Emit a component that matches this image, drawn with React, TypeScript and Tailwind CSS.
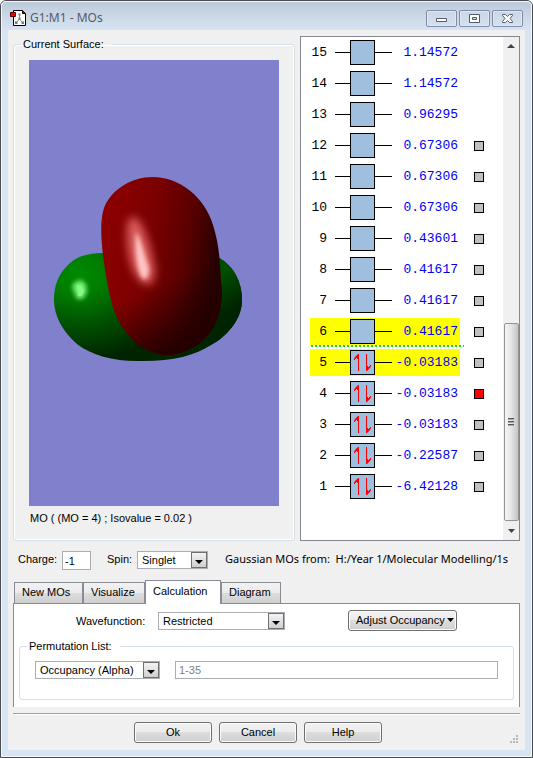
import { useState, type ReactNode } from "react";

type Orbital = { n: number; energy: string; occupied?: boolean; surface?: boolean; marker?: "homo" | "lumo" };

const orbitals: Orbital[] = [
  { n: 15, energy: "1.14572" },
  { n: 14, energy: "1.14572" },
  { n: 13, energy: "0.96295" },
  { n: 12, energy: "0.67306", surface: true },
  { n: 11, energy: "0.67306", surface: true },
  { n: 10, energy: "0.67306", surface: true },
  { n: 9, energy: "0.43601", surface: true },
  { n: 8, energy: "0.41617", surface: true },
  { n: 7, energy: "0.41617", surface: true },
  { n: 6, energy: "0.41617", surface: true, marker: "lumo" },
  { n: 5, energy: "-0.03183", surface: true, occupied: true, marker: "homo" },
  { n: 4, energy: "-0.03183", surface: true, occupied: true },
  { n: 3, energy: "-0.03183", surface: true, occupied: true },
  { n: 2, energy: "-0.22587", surface: true, occupied: true },
  { n: 1, energy: "-6.42128", surface: true, occupied: true },
];

function AppIcon() {
  return (
    <svg width="16" height="16" viewBox="0 0 16 16" aria-hidden="true">
      <path d="M3.500 .5h9l3 3v12h-12z" fill="#fff" stroke="#000" />
      <path d="M12.500 .5v3h3" fill="#c00" stroke="#000" />
      <path d="M9.500 5v4M9.500 9l-3 3.500M9.500 9l3 3.500" fill="none" stroke="#999" />
      <path d="M8.500 3.500h2v2h-2zM8.500 7.500h2v2.500h-2zM5 11.500h2.500v2.500H5zM11.500 11.500H14v2.500h-2.500z" fill="#777" />
      <path d="M.5 2.500h5v4h-5z" fill="#f00" stroke="#500" />
    </svg>
  );
}

function CaptionButton({ label, children }: { label: string; children: ReactNode }) {
  return (
    <button
      aria-label={label}
      className="flex h-[17px] w-[31px] items-center justify-center rounded-[2px] border border-[#7f8ba8] bg-linear-to-b from-[#c9d7e6] to-[#d3e1ef] shadow-[inset_0_0_0_1px_#dfe9f4]"
    >
      <svg width="13" height="11" viewBox="0 0 13 11" aria-hidden="true">
        {children}
      </svg>
    </button>
  );
}

function Surface() {
  return (
    <svg className="block h-[446px] w-full bg-[#8080cc]" viewBox="0 0 250 446" role="img" aria-label="Molecular orbital surface">
      <defs>
        <radialGradient id="green" gradientUnits="userSpaceOnUse" cx="50" cy="214" r="110" gradientTransform="translate(50 214) scale(1 .78) translate(-50 -214)">
          <stop offset="0" stopColor="#008a00" />
          <stop offset=".25" stopColor="#007c00" />
          <stop offset=".6" stopColor="#005000" />
          <stop offset="1" stopColor="#002400" />
        </radialGradient>
        <linearGradient id="lobe" gradientUnits="userSpaceOnUse" x1="190" y1="215" x2="208" y2="246">
          <stop offset="0" stopColor="#004e00" />
          <stop offset="1" stopColor="#002400" />
        </linearGradient>
        <linearGradient id="red" gradientUnits="userSpaceOnUse" x1="82" y1="165" x2="190" y2="182">
          <stop offset="0" stopColor="#8a0000" />
          <stop offset=".35" stopColor="#7c0000" />
          <stop offset=".7" stopColor="#5c0000" />
          <stop offset="1" stopColor="#280000" />
        </linearGradient>
        <linearGradient id="redShade" gradientUnits="userSpaceOnUse" x1="125" y1="228" x2="150" y2="286">
          <stop offset="0" stopColor="#240000" stopOpacity="0" />
          <stop offset=".5" stopColor="#240000" stopOpacity=".45" />
          <stop offset="1" stopColor="#240000" stopOpacity=".95" />
        </linearGradient>
        <filter id="soft3" x="-100%" y="-50%" width="300%" height="200%">
          <feGaussianBlur stdDeviation="4" />
        </filter>
        <filter id="soft2" x="-100%" y="-50%" width="300%" height="200%">
          <feGaussianBlur stdDeviation="2" />
        </filter>
      </defs>
      <path d="M74 193C58 193 46 197 38 206C28 216 25 228 25 240C25 256 34 272 48 284C62 295 84 301 108 301C140 302 166 296 182 285C200 275 213 258 213 240C213 222 205 206 190 198Z" fill="url(#green)" />
      <path d="M189 197C205 206 213 222 213 240C213 258 200 275 182 285L160 293Z" fill="url(#lobe)" />
      <path d="M46 222l6-2 5 4 1 8-4 7h-6l-3-7-2-6z" fill="#70f070" filter="url(#soft2)" />
      <path d="M48 225l5 1 2 5-2 5h-4z" fill="#98ff98" opacity=".6" />
      <path d="M124 117C102 117 82 130 75 148C71 160 72 178 74 195C76 210 78 225 82 240C87 264 108 295 138 295C160 295 178 280 186 265C193 248 194 236 192 222C191 200 190 184 184 165C176 137 150 117 124 117Z" fill="url(#red)" />
      <path d="M124 117C102 117 82 130 75 148C71 160 72 178 74 195C76 210 78 225 82 240C87 264 108 295 138 295C160 295 178 280 186 265C193 248 194 236 192 222C191 200 190 184 184 165C176 137 150 117 124 117Z" fill="url(#redShade)" />
      <path d="M102 157C111 156 116 170 121 186C126 206 129 216 122 224C113 228 104 214 100 198C97 182 96 162 102 157Z" fill="#d85858" filter="url(#soft3)" />
      <path d="M107 172C112 178 115 194 120 208C120 216 118 220 114 219C108 213 105 190 107 172Z" fill="#ffc4c4" filter="url(#soft2)" />
    </svg>
  );
}

function OrbitalRow({ orbital, selected, onToggle }: { orbital: Orbital; selected: boolean; onToggle: () => void }) {
  return (
    <li className="relative flex h-[31px] items-center pl-[9px] font-['Liberation_Mono',monospace] text-[13px]">
      <div className={`flex h-[27px] w-[150px] items-center ${orbital.marker ? "bg-[#ffff00]" : ""}`}>
        <span className="flex w-[17px] justify-end">{orbital.n}</span>
        <span className="ml-2 h-px w-[15px] bg-black" />
        <span className="flex size-[25px] items-center justify-center border border-black bg-[#a0bede]">
          {orbital.occupied && (
            <svg width="19" height="19" viewBox="0 0 19 19" fill="#f00" aria-hidden="true">
              <path d="M5 1h1v17H5zM5 1v5H4V5H3v1H2v1H1V6l1-2 1-1 1-1z" />
              <path d="M13 1h1v17h-1zM14 18v-5h1v1h1v-1h1v-1h1v1l-1 2-1 1-1 1z" />
            </svg>
          )}
        </span>
        <span className="h-px w-[17px] bg-black" />
        <span className="flex w-[66px] justify-end text-[#0000f0]">{orbital.energy}</span>
      </div>
      {orbital.surface && (
        <input
          type="checkbox"
          aria-label={`Show orbital ${orbital.n}`}
          checked={selected}
          onChange={onToggle}
          className="ml-[14px] size-[10px] appearance-none border border-black bg-[#c0c0c0] checked:bg-[#ff0000]"
        />
      )}
      {orbital.marker === "lumo" && (
        <span className="absolute bottom-0 left-[10px] h-[2px] w-[153px] bg-[repeating-linear-gradient(to_right,#00e800_0_2px,#ffffff_2px_4px)]" />
      )}
    </li>
  );
}

function Select({ id, label, value, className }: { id: string; label?: string; value: string; className: string }) {
  return (
    <div className={`relative h-[18px] ${className}`}>
      <select id={id} aria-label={label} className="block h-full w-full appearance-none border border-[#abadb3] bg-white pr-[18px] pb-0.5 pl-1 text-[11px] leading-4">
        <option>{value}</option>
      </select>
      <span className="pointer-events-none absolute top-px right-px flex h-4 w-4 items-center justify-center border border-[#707070] bg-linear-to-b from-[#f4f4f4] to-[#cfcfcf]">
        <svg width="8" height="4" viewBox="0 0 8 4" className="mt-1" aria-hidden="true">
          <path d="M0 0h8L4 4z" />
        </svg>
      </span>
    </div>
  );
}

const pushButton =
  "h-[21px] rounded-[3px] border border-[#707070] bg-[linear-gradient(#f2f2f2,#ebebeb_50%,#dddddd_50%,#cfcfcf)] pb-0.5 shadow-[inset_0_0_0_1px_#fbfbfb]";

const tabs = [
  { name: "New MOs", width: "w-[69px]" },
  { name: "Visualize", width: "w-[62px]" },
  { name: "Calculation", width: "w-[76px]" },
  { name: "Diagram", width: "w-[60px]" },
];

export default function App() {
  const [shown, setShown] = useState<number>(4);
  const [tab, setTab] = useState("Calculation");
  return (
    <div className="w-full rounded-t-[6px] border border-[#4a4a50] bg-[#d7e4f2] font-['Liberation_Sans',Arial,sans-serif] text-[11px] leading-4 text-black">
      <div className="rounded-t-[5px] border border-[#f2f7fc] bg-[linear-gradient(#bccada,#d7e4f2_28px)] px-[6px] pb-[6px]">
        <header className="flex h-7 items-center px-0.5 pt-1">
          <AppIcon />
          <h1 className="ml-1 flex-1 font-['Noto_Sans',sans-serif] text-[12px] text-[#545c68]">G1:M1 - MOs</h1>
          <div className="flex gap-[2px]">
            <CaptionButton label="Minimize">
              <path d="M1.500 5.500h10v3h-10z" fill="#fff" stroke="#555b6b" />
            </CaptionButton>
            <CaptionButton label="Maximize">
              <path d="M1.500 1.500h10v8h-10zM4.500 4.500v2h4v-2z" fill="#fff" fillRule="evenodd" stroke="#555b6b" />
            </CaptionButton>
            <CaptionButton label="Close">
              <path d="M1.500 1.500h3l2 2 2-2h3v1L9 5.500l2.500 3v1h-3l-2-2-2 2h-3v-1L4 5.500l-2.500-3z" fill="#fff" stroke="#555b6b" />
            </CaptionButton>
          </div>
        </header>

        <main className="bg-[#f0f0f0] px-[5px] pt-[6px] pb-[7px]">
          <div className="flex gap-[5px]">
            <fieldset className="min-w-0 flex-1 rounded-[3px] border border-[#d5dfe5] px-[15px] shadow-[inset_0_0_0_1px_#ffffff]">
              <legend className="-ml-2 pr-2 pl-0.5">Current Surface:</legend>
              <div className="pt-2">
                <Surface />
                <p className="pt-1 pb-[14px] pl-px">MO ( (MO = 4) ; Isovalue = 0.02 )</p>
              </div>
            </fieldset>

            <section aria-label="Orbital energies" className="flex w-[220px] border border-[#828790] bg-white">
              <ul className="flex-1 pb-[38px]">
                {orbitals.map((o) => (
                  <OrbitalRow key={o.n} orbital={o} selected={shown === o.n} onToggle={() => setShown(o.n)} />
                ))}
              </ul>
              <div className="flex w-4 flex-col items-center bg-[#f0f0f0]">
                <svg width="8" height="4" viewBox="0 0 8 4" className="mt-[7px]" aria-hidden="true">
                  <path d="M4 0l4 4H0z" fill="#444" />
                </svg>
                <div className="flex-1" />
                <div className="flex h-[198px] w-[15px] items-center justify-center rounded-[2px] border border-[#949494] bg-linear-to-r from-[#f5f5f5] via-[#e4e4e6] to-[#c4c4c8]">
                  <svg width="6" height="8" viewBox="0 0 6 8" aria-hidden="true">
                    <path d="M0 .5h6M0 3.500h6M0 6.500h6" stroke="#555" />
                    <path d="M0 1.500h6M0 4.500h6M0 7.500h6" stroke="#aaa" />
                  </svg>
                </div>
                <svg width="7" height="4" viewBox="0 0 7 4" className="mt-2 mb-[7px]" aria-hidden="true">
                  <path d="M0 0h7L3.500 4z" fill="#444" />
                </svg>
              </div>
            </section>
          </div>

          <div className="mt-[10px] flex h-[19px] items-start pl-[5px]">
            <label htmlFor="charge" className="w-11">Charge:</label>
            <input id="charge" defaultValue="-1" className="h-[19px] w-[29px] border border-[#abadb3] bg-white px-0.5" />
            <label htmlFor="spin" className="ml-4 w-[30px]">Spin:</label>
            <Select id="spin" value="Singlet" className="w-[71px] shrink-0" />
            <p className="ml-[17px] min-w-0 flex-1 overflow-hidden font-['Noto_Sans',sans-serif] text-[11px] whitespace-pre">
              Gaussian MOs from:  H:/Year 1/Molecular Modelling/1s
            </p>
          </div>

          <div role="tablist" className="mt-[10px] flex items-end pl-px">
            {tabs.map((t) => (
              <button
                key={t.name}
                role="tab"
                aria-selected={tab === t.name}
                onClick={() => setTab(t.name)}
                className={`${t.width} border border-b-0 border-[#898c95] pl-[7px] text-left ${
                  tab === t.name
                    ? "relative -mb-px h-6 bg-white pb-1"
                    : "h-[21px] bg-[linear-gradient(#f2f2f2,#ebebeb_50%,#dddddd_50%,#cfcfcf)] pb-0.5"
                }`}
              >
                {t.name}
              </button>
            ))}
          </div>
          <div role="tabpanel" className="border border-b-0 border-[#898c95] bg-white px-[5px] pt-[6px] pb-[7px]">
            <div className="flex items-center pl-[57px]">
              <label htmlFor="wave" className="w-[82px]">Wavefunction:</label>
              <Select id="wave" value="Restricted" className="w-[127px]" />
              <button className={`${pushButton} ml-[63px] flex w-[109px] items-center justify-between pr-0.5 pl-[7px] whitespace-nowrap`}>
                Adjust Occupancy
                <svg width="7" height="4" viewBox="0 0 7 4" aria-hidden="true">
                  <path d="M0 0h7L3.500 4z" />
                </svg>
              </button>
            </div>
            <fieldset className="mt-[7px] rounded-[3px] border border-[#d5dfe5] px-[15px] pb-5">
              <legend className="-ml-2 pr-2 pl-0.5">Permutation List:</legend>
              <div className="flex gap-[15px] pt-[7px]">
                <Select id="perm" label="Permutation list" value="Occupancy (Alpha)" className="w-[125px]" />
                <input aria-label="Permutation range" disabled defaultValue="1-35" className="h-[18px] min-w-0 flex-1 border border-[#abadb3] bg-white px-[3px] text-[#808080]" />
              </div>
            </fieldset>
          </div>
          <hr className="mt-[6px] border-t border-b border-t-[#a0a0a0] border-b-white" />
          <footer className="relative flex justify-center gap-[7px] pt-[7px] pr-[17px]">
            <button className={`${pushButton} w-[78px]`}>Ok</button>
            <button className={`${pushButton} w-[78px]`}>Cancel</button>
            <button className={`${pushButton} w-[78px]`}>Help</button>
            <svg width="8" height="8" viewBox="0 0 8 8" className="absolute right-[2px] bottom-0" aria-hidden="true">
              <path d="M6 0h2v2h-2zM3 3h2v2h-2zM6 3h2v2h-2zM0 6h2v2h-2zM3 6h2v2h-2zM6 6h2v2h-2z" fill="#b8b8b8" />
            </svg>
          </footer>
        </main>
      </div>
    </div>
  );
}
